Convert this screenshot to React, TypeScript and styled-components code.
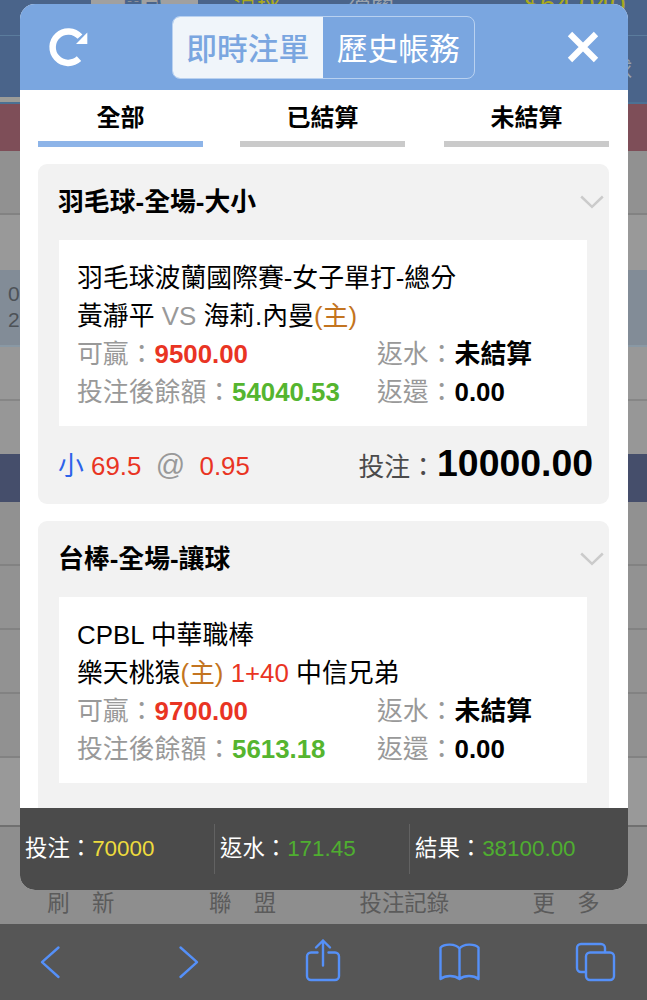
import React from 'react';
import styled, { createGlobalStyle } from 'styled-components';

const GlobalStyle = createGlobalStyle`
  * { box-sizing: border-box; }
  html, body { margin: 0; padding: 0; }
  body {
    font-family: "Liberation Sans", "Noto Sans CJK TC", sans-serif;
    overflow: hidden;
    color: #000;
  }
`;

const Screen = styled.div`
  position: relative;
  width: 647px;
  height: 1000px;
  display: flex;
  flex-direction: column;
  overflow: hidden;
  background: #959595;
`;

const SiteTop = styled.div`
  height: 36px;
  flex: none;
  display: flex;
  background: #4a648a;
  border-bottom: 1px solid #5b7c9d;
  overflow: hidden;
  padding-left: 91px;
`;

const SiteTab = styled.div<{ $w: number; $active?: boolean; $color: string; $size?: number }>`
  flex: none;
  width: ${p => p.$w}px;
  height: 28px;
  text-align: center;
  color: ${p => p.$color};
  background: ${p => (p.$active ? '#a0a0a0' : 'transparent')};
  font-size: ${p => p.$size ?? 23}px;
  line-height: 9px;
  white-space: nowrap;
  font-weight: ${p => (p.$active ? 700 : 400)};
`;

const SiteNav = styled.div`
  height: 61px;
  flex: none;
  display: flex;
  justify-content: flex-end;
  background: #4a648a;
  color: #9ba3ad;
  font-size: 22px;
  line-height: 68px;
  padding-right: 15px;
`;

const NavUnderline = styled.div`
  height: 7px;
  flex: none;
  background: linear-gradient(90deg, #9c9c98 0 30px, #4a648a 30px);
  border-bottom: 2px solid #4b7194;
`;

const Band = styled.div<{ $h: number; $bg: string; $line?: string }>`
  height: ${p => p.$h}px;
  flex: none;
  background: ${p => p.$bg};
  border-bottom: ${p => (p.$line ? `2px solid ${p.$line}` : 'none')};
  padding: 11px 0 0 8px;
  font-size: 21px;
  line-height: 26px;
  color: #4d5257;
`;

const SiteMenu = styled.div`
  flex: 1;
  display: grid;
  grid-template-columns: repeat(4, 161.75px);
  align-items: end;
  text-align: center;
  background: #8e8e8e;
  color: #5b5b5b;
  font-size: 22.4px;
  line-height: 30px;
  padding-bottom: 5px;
`;

const BrowserBar = styled.div`
  height: 76px;
  flex: none;
  display: flex;
  align-items: flex-start;
  justify-content: space-between;
  background: #565656;
  padding: 14px 29px 0 28px;
  svg {
    fill: none;
    stroke: #5590f8;
    stroke-width: 2.4;
    stroke-linecap: round;
    stroke-linejoin: round;
  }
`;

const Modal = styled.section`
  position: absolute;
  left: 20px;
  top: 4px;
  width: 608px;
  height: 886px;
  display: flex;
  flex-direction: column;
  border-radius: 15px;
  overflow: hidden;
  background: #fff;
`;

const Header = styled.header`
  height: 86px;
  flex: none;
  display: flex;
  justify-content: space-between;
  background: #7aa6e0;
  padding: 12px 25px 0 28px;
`;

const IconButton = styled.button`
  border: 0;
  padding: 0;
  background: none;
  width: 40px;
  height: 62px;
  display: flex;
  align-items: center;
  justify-content: center;
`;

const Segments = styled.div`
  width: 303px;
  height: 63px;
  display: flex;
  margin-right: 5px;
  border: 1px solid #b9d1f0;
  border-radius: 8px;
  overflow: hidden;
`;

const Segment = styled.div<{ $active?: boolean }>`
  flex: 1;
  text-align: center;
  font-size: 30.8px;
  line-height: 66px;
  font-weight: ${p => (p.$active ? 500 : 400)};
  color: ${p => (p.$active ? '#7aa6e0' : '#fff')};
  background: ${p => (p.$active ? '#f0f5fa' : 'transparent')};
`;

const Tabs = styled.nav`
  flex: none;
  display: flex;
  gap: 37px;
  padding-left: 18px;
`;

const Tab = styled.div<{ $active?: boolean }>`
  width: 165px;
  height: 57px;
  text-align: center;
  font-size: 24px;
  line-height: 55px;
  font-weight: 700;
  border-bottom: 6px solid ${p => (p.$active ? '#8db4e8' : '#cacaca')};
  &:last-child { margin-left: 2px; }
`;

const List = styled.div`
  flex: 1;
  min-height: 0;
  overflow: hidden;
  display: flex;
  flex-direction: column;
  gap: 17px;
  padding: 17px 19px 0 18px;
`;

const Card = styled.article`
  flex: none;
  height: 340px;
  border-radius: 9px;
  background: #f2f2f2;
  font-size: 25.85px;
`;

const CardHead = styled.div`
  height: 76px;
  display: flex;
  align-items: center;
  justify-content: space-between;
  padding: 0 5px 0 20px;
  font-weight: 700;
`;

const CardTitle = styled.h2`
  margin: 0;
  padding-bottom: 5px;
  font-size: inherit;
`;

const Detail = styled.div`
  margin: 0 22px 0 21px;
  height: 186px;
  background: #fff;
  padding: 19px 18px 0;
`;

const Line = styled.div`
  height: 38px;
  line-height: 38px;
  white-space: pre;
`;

const Columns = styled(Line)`
  display: grid;
  grid-template-columns: 300px 1fr;
`;

const Text = styled.span<{ $c: string; $b?: boolean }>`
  color: ${p => p.$c};
  font-weight: ${p => (p.$b ? 700 : 400)};
`;

const CardFoot = styled.div`
  display: flex;
  justify-content: space-between;
  align-items: baseline;
  padding: 12px 16px 0 20px;
  line-height: 50px;
  white-space: pre;
`;

const Odds = styled.div`
  position: relative;
  top: -1px;
`;

const At = styled.span`
  font-size: 29px;
  line-height: 1;
  color: #999;
`;

const Stake = styled.strong`
  font-size: 37.4px;
  margin-left: 1px;
`;

const Summary = styled.footer`
  height: 82px;
  flex: none;
  display: grid;
  grid-template-columns: 194px 195px 1fr;
  align-items: start;
  background: #4b4b4b;
  padding-top: 16px;
  font-size: 22.4px;
  color: #fff;
`;

const Total = styled.div`
  height: 50px;
  line-height: 49px;
  padding-left: 5px;
  & + & { border-left: 1px solid #626262; }
`;

const RED = '#e93423';
const GREEN = '#55b52f';
const GREY = '#999';
const HOME = '#c37420';

const Chevron = () => (
  <svg width="24" height="14" viewBox="0 0 24 14" fill="none" stroke="#cbcbcb" strokeWidth="2.5">
    <path d="M1.2 1.5 12 11.8 22.8 1.5" />
  </svg>
);

type BetProps = {
  title: string;
  league: string;
  match: React.ReactNode;
  win: string;
  balance: string;
  children?: React.ReactNode;
};

const Bet = ({ title, league, match, win, balance, children }: BetProps) => (
  <Card>
    <CardHead><CardTitle>{title}</CardTitle><Chevron /></CardHead>
    <Detail>
      <Line>{league}</Line>
      <Line>{match}</Line>
      <Columns>
        <div><Text $c={GREY}>可贏：</Text><Text $c={RED} $b>{win}</Text></div>
        <div><Text $c={GREY}>返水：</Text><Text $c="#000" $b>未結算</Text></div>
      </Columns>
      <Columns>
        <div><Text $c={GREY}>投注後餘額：</Text><Text $c={GREEN} $b>{balance}</Text></div>
        <div><Text $c={GREY}>返還：</Text><Text $c="#000" $b>0.00</Text></div>
      </Columns>
    </Detail>
    {children}
  </Card>
);

export default function App() {
  return (
    <Screen>
      <GlobalStyle />
      <SiteTop>
        <SiteTab $w={107} $active $color="#4a648a">單式</SiteTab>
        <SiteTab $w={118} $color="#aaa91d">滾球</SiteTab>
        <SiteTab $w={110} $color="#9ba3ad">過關</SiteTab>
        <SiteTab $w={298} $color="#aaa91d" $size={28}>$64,040</SiteTab>
      </SiteTop>
      <SiteNav>球</SiteNav>
      <NavUnderline />
      <Band $h={47} $bg="#7e4e58" />
      <Band $h={64} $bg="#919191" $line="#828282" />
      <Band $h={55} $bg="#999" />
      <Band $h={77} $bg="#828c97" $line="#8998a4">0<br />2</Band>
      <Band $h={54} $bg="#989898" $line="#868686" />
      <Band $h={53} $bg="#979797" />
      <Band $h={48} $bg="#454e6b" />
      <Band $h={64} $bg="#919191" $line="#828282" />
      <Band $h={64} $bg="#929292" $line="#828282" />
      <Band $h={64} $bg="#929292" $line="#828282" />
      <Band $h={64} $bg="#919191" $line="#828282" />
      <Band $h={69} $bg="#999" $line="#707070" />
      <SiteMenu>
        <span>刷　新</span><span>聯　盟</span><span>投注記錄</span><span>更　多</span>
      </SiteMenu>
      <BrowserBar>
        <svg width="44" height="48" viewBox="0 0 44 48"><path d="M30.5 9.5 14 24.2 30.5 39" /></svg>
        <svg width="44" height="48" viewBox="0 0 44 48"><path d="M15.5 9.5 32 24.2 15.5 39" /></svg>
        <svg width="44" height="48" viewBox="0 0 44 48"><path d="M16.5 14.5H10a4 4 0 0 0-4 4V38a4 4 0 0 0 4 4h24a4 4 0 0 0 4-4V18.500a4 4 0 0 0-4-4h-6.500M22 27.500V2.500M15 9.500 22 2.500l7 7" /></svg>
        <svg width="44" height="48" viewBox="0 0 44 48"><path d="M21.500 11v29M21.500 10.500C17.500 5.500 6.500 5.500 2.500 9.500v31.500c5-4 14-4 19 0 5-4 14-4 19 0V9.500c-4-4-15-4-19 1" /></svg>
        <svg width="44" height="48" viewBox="0 0 44 48"><path d="M12 34H7a4 4 0 0 1-4-4V10a4 4 0 0 1 4-4h20a4 4 0 0 1 4 4v4" /><rect x="12" y="14.500" width="28" height="27.500" rx="4" /></svg>
      </BrowserBar>

      <Modal>
        <Header>
          <IconButton aria-label="refresh">
            <svg width="40" height="40" viewBox="0 0 40 40">
              <path d="M31 31.700A15.700 15.700 0 1 1 32 9.700" fill="none" stroke="#fff" strokeWidth="6.500" />
              <path d="M39.300 5.500V17H28Z" fill="#fff" />
            </svg>
          </IconButton>
          <Segments>
            <Segment $active>即時注單</Segment>
            <Segment>歷史帳務</Segment>
          </Segments>
          <IconButton aria-label="close">
            <svg width="32" height="32" viewBox="0 0 32 32" stroke="#fff" strokeWidth="6.2">
              <path d="M3 3 29 29M29 3 3 29" />
            </svg>
          </IconButton>
        </Header>
        <Tabs>
          <Tab $active>全部</Tab>
          <Tab>已結算</Tab>
          <Tab>未結算</Tab>
        </Tabs>
        <List>
          <Bet
            title="羽毛球-全場-大小"
            league="羽毛球波蘭國際賽-女子單打-總分"
            match={<>黃瀞平 <Text $c={GREY}>VS</Text> 海莉.內曼<Text $c={HOME}>(主)</Text></>}
            win="9500.00"
            balance="54040.53"
          >
            <CardFoot>
              <Odds>
                <Text $c="#2d63ea">小</Text> <Text $c={RED}>69.5</Text>  <At>@</At>  <Text $c={RED}>0.95</Text>
              </Odds>
              <div><Text $c="#4b4b4b">投注：</Text><Stake>10000.00</Stake></div>
            </CardFoot>
          </Bet>
          <Bet
            title="台棒-全場-讓球"
            league="CPBL 中華職棒"
            match={<>樂天桃猿<Text $c={HOME}>(主)</Text> <Text $c={RED}>1+40</Text> 中信兄弟</>}
            win="9700.00"
            balance="5613.18"
          />
        </List>
        <Summary>
          <Total>投注：<Text $c="#eedb3d">70000</Text></Total>
          <Total>返水：<Text $c="#4fae30">171.45</Text></Total>
          <Total>結果：<Text $c="#4fae30">38100.00</Text></Total>
        </Summary>
      </Modal>
    </Screen>
  );
}
